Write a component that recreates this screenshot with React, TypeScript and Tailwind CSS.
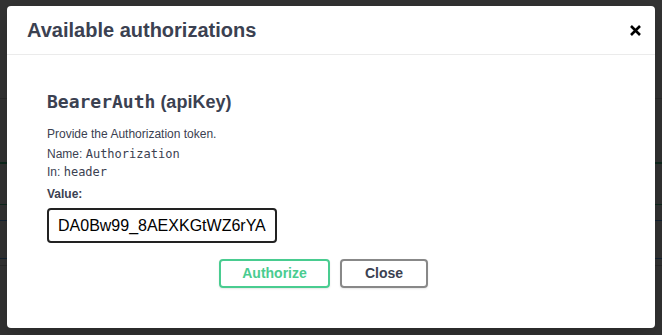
import React from "react";

const sans = { fontFamily: '"Liberation Sans", Arial, sans-serif' };
const mono = { fontFamily: '"DejaVu Sans Mono", monospace' };

export default function App() {
  return (
    <div className="relative w-[662px] h-[335px] overflow-hidden bg-white" style={sans}>
      {/* underlying page (dimmed) */}
      <div className="flex flex-col">
        <div className="h-[98px]" />
        <div className="h-[64px] border-t border-[#d0d0d0]" />
        <div className="h-[42px] border-t-2 border-[#49cc90]" />
        <div className="h-[16px] border-t border-[#49cc90]" />
        <div className="h-[38px] border-t border-[#61affe]" />
        <div className="h-[7px] border-t border-[#61affe]" />
        <div className="h-[60px] border-t border-[#d0d0d0]" />
      </div>
      <div className="absolute inset-0 bg-black/80" />

      {/* modal */}
      <div className="absolute left-[7px] top-[6px] w-[648px] h-[322px] bg-white rounded-[4px] shadow-[0_10px_30px_rgba(0,0,0,0.2)] flex flex-col text-[#3b4151]">
        <div className="h-[49px] border-b border-[#ebebeb] flex items-center justify-between pl-[20px] pr-[14px]">
          <h3 className="text-[20px] font-bold leading-[24px] text-[#3b4151]">Available authorizations</h3>
          <button className="w-[12px] h-[12px] flex items-center justify-center">
            <svg width="11" height="11" viewBox="0 0 11 11">
              <path d="M1 1 L10 10 M10 1 L1 10" stroke="#000" strokeWidth="2.6" strokeLinecap="butt" />
            </svg>
          </button>
        </div>

        <div className="flex flex-col pl-[40px] pt-[35px]">
          <h4 className="text-[18px] font-bold leading-[24px] flex items-baseline">
            <code style={mono} className="font-bold">BearerAuth</code>
            <span className="ml-[5px]">(apiKey)</span>
          </h4>
          <p className="mt-[11px] text-[12px] leading-[18px]">Provide the Authorization token.</p>
          <p className="mt-[2px] text-[12px] leading-[18px]">
            Name: <code style={mono}>Authorization</code>
          </p>
          <p className="text-[12px] leading-[18px]">
            In: <code style={mono}>header</code>
          </p>
          <label className="mt-[4px] text-[12px] leading-[18px] font-bold">Value:</label>
          <div className="mt-[5px]">
            <input
              readOnly
              value="DA0Bw99_8AEXKGtWZ6rYA"
              className="w-[230px] h-[35px] border-2 border-[#222] rounded-[4px] px-[9px] text-[16px] text-black bg-white outline-none"
              style={sans}
            />
          </div>
          <div className="mt-[16px] flex pl-[172px] gap-[10px]">
            <button className="w-[111px] h-[29px] border-2 border-[#49cc90] rounded-[4px] text-[#49cc90] text-[14px] font-bold shadow-[0_1px_2px_rgba(0,0,0,0.1)]">
              Authorize
            </button>
            <button className="w-[88px] h-[29px] border-2 border-[#888] rounded-[4px] text-[#3b4151] text-[14px] font-bold shadow-[0_1px_2px_rgba(0,0,0,0.1)]">
              Close
            </button>
          </div>
        </div>
      </div>
    </div>
  );
}
